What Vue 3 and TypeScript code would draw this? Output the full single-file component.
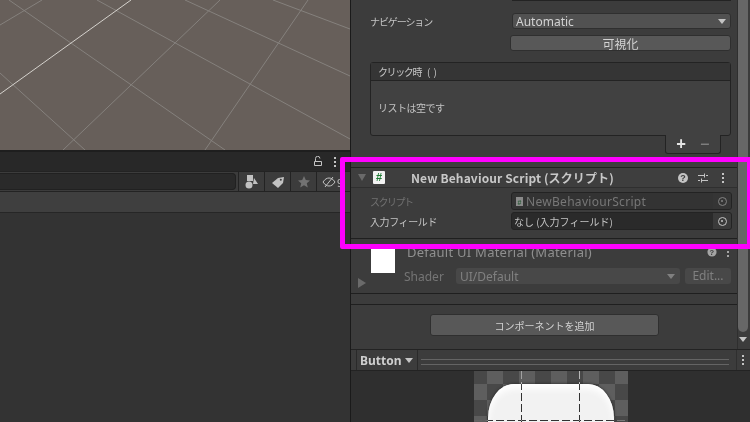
<script setup lang="ts">
const mainLine = 'M0 94 L131 0';
const thin = [
  'M0 25 L42 0',
  'M9 0 L225 150',
  'M220 0 L63 150',
  'M308 0 L205 150',
  'M97 0 L350 139',
  'M185 0 L350 76',
  'M273 0 L350 29',
  'M0 73 L85 150',
];
</script>

<template>
  <div class="app">
    <div class="left">
      <div class="viewport">
        <svg class="grid" width="350" height="150" viewBox="0 0 350 150">
          <path v-for="d in thin" :key="d" :d="d" stroke="#85817d" stroke-width="1" fill="none" />
          <path :d="mainLine" stroke="#d5d2cd" stroke-width="1" fill="none" />
        </svg>
      </div>
      <div class="tabbar">
        <svg width="10" height="11" viewBox="0 0 10 11" class="lock">
          <path d="M1.5 5.5h7v4h-7zM2.5 5V2.5a2.2 2.2 0 0 1 4.4 0" fill="none" stroke="#c4c4c4" />
        </svg>
        <span class="kebab"><i></i><i></i><i></i></span>
      </div>
      <div class="toolbar">
        <div class="search"></div>
        <div class="tool">
          <svg width="14" height="14" viewBox="0 0 14 14">
            <rect x="2" y="0" width="6" height="6" fill="#c2c2c2" />
            <circle cx="4" cy="10" r="3.5" fill="#c2c2c2" />
            <path d="M9 3l4 6H8z" fill="#c2c2c2" />
          </svg>
        </div>
        <div class="tool">
          <svg width="14" height="14" viewBox="0 0 14 14">
            <path d="M1 8l6-5 6-1-1 6-5 5z" fill="#c2c2c2" />
            <circle cx="9.8" cy="4.8" r="1" fill="#3c3c3c" />
          </svg>
        </div>
        <div class="tool">
          <svg width="14" height="14" viewBox="0 0 14 14">
            <path d="M7 1l1.8 4 4.2.4-3.2 2.8 1 4.3L7 10.2l-3.8 2.3 1-4.3L1 5.4 5.2 5z" fill="#727272" />
          </svg>
        </div>
        <div class="tool eye">
          <svg width="14" height="12" viewBox="0 0 14 12">
            <path d="M1 6c2-3 4-4 6-4s4 1 6 4c-2 3-4 4-6 4S3 9 1 6zM3 11L11 1" fill="none" stroke="#c2c2c2" />
          </svg>
          <span class="nine">9</span>
        </div>
      </div>
      <div class="subbar"></div>
      <div class="project"></div>
    </div>

    <div class="right">
      <div class="scrollcol">
        <div class="inspector">
          <div class="top-row"><div class="stub"></div></div>
          <div class="prop nav">
            <span class="label nav-label">ナビゲーション</span>
            <div class="dropdown"><span>Automatic</span><i class="caret"></i></div>
          </div>
          <div class="visual"><button class="btn vis">可視化</button></div>
          <div class="event">
            <div class="event-head"><span class="event-name">クリック時</span><span class="parens">()</span></div>
            <div class="event-body">リストは空です</div>
          </div>
          <div class="footer-wrap">
            <div class="pm"><span class="plus">+</span><span class="minus">−</span></div>
          </div>
          <div class="script-head">
            <i class="fold"></i>
            <span class="file"><b>#</b></span>
            <span class="title">New Behaviour Script (スクリプト)</span>
            <span class="head-icons">
              <svg width="12" height="12" viewBox="0 0 12 12"><circle cx="6" cy="6" r="5" fill="#c4c4c4" /><text x="6" y="9" text-anchor="middle" class="q">?</text></svg>
              <svg width="12" height="12" viewBox="0 0 12 12"><path d="M1 3.5h6M9 3.5h2M7.5 1.5v4M1 8.5h2M5 8.5h6M4.5 6.5v4" stroke="#c4c4c4" fill="none" /></svg>
              <span class="kebab head-kebab"><i></i><i></i><i></i></span>
            </span>
          </div>
          <div class="script-body">
            <div class="prop dim">
              <span class="label script-label">スクリプト</span>
              <div class="objfield disabled">
                <span class="mini"><b>#</b></span><span class="objname">NewBehaviourScript</span>
                <span class="pick"><i></i></span>
              </div>
            </div>
            <div class="prop">
              <span class="label field-label">入力フィールド</span>
              <div class="objfield">
                <span class="none">なし (入力フィールド)</span>
                <span class="pick"><i></i></span>
              </div>
            </div>
          </div>
          <div class="material">
            <div class="swatch-col"><div class="swatch"></div><i class="mat-fold"></i></div>
            <div class="mat-main">
              <div class="mat-title">
                <span>Default UI Material (Material)</span>
                <span class="mat-icons">
                  <svg width="10" height="10" viewBox="0 0 12 12"><circle cx="6" cy="6" r="5.5" fill="#a5a5a5" /><text x="6" y="9.5" text-anchor="middle" class="q">?</text></svg>
                  <span class="kebab small"><i></i><i></i><i></i></span>
                </span>
              </div>
              <div class="mat-row">
                <span class="shader">Shader</span>
                <div class="shader-drop"><span>UI/Default</span><i class="caret"></i></div>
                <div class="edit">Edit...</div>
              </div>
            </div>
          </div>
          <div class="add-zone"><button class="btn add">コンポーネントを追加</button></div>
        </div>
        <div class="scrollbar"><div class="thumb"></div><i class="sb-arrow"></i></div>
      </div>
      <div class="preview-bar">
        <div class="pv-name">Button <i class="caret white"></i></div>
        <div class="pv-lines"></div>
        <div class="pv-menu"><span class="kebab"><i></i><i></i><i></i></span></div>
      </div>
      <div class="preview">
        <div class="checker">
          <div class="sprite"></div>
          <i class="slice v1"></i><i class="slice v2"></i><i class="slice h1"></i>
        </div>
      </div>
    </div>
    <div class="highlight"></div>
  </div>
</template>

<style>
html, body { margin: 0; background: #282828; }
</style>

<style scoped>
.app { position: relative; width: 750px; height: 422px; overflow: hidden; display: flex; background: #282828; font-family: "Noto Sans CJK JP", "Noto Sans", sans-serif; font-size: 10px; color: #c4c4c4; }
.left { width: 350px; flex: none; display: flex; flex-direction: column; }
.viewport { height: 152px; box-sizing: border-box; background: #675f5a; border-bottom: 2px solid #1e1e1e; }
.grid { display: block; }
.tabbar { height: 19px; background: #282828; display: flex; align-items: center; justify-content: flex-end; gap: 11px; padding-right: 13px; }
.lock { display: block; }
.kebab { display: inline-flex; flex-direction: column; gap: 2px; width: 3px; }
.kebab i { width: 2px; height: 2px; background: #c4c4c4; display: block; }
.toolbar { height: 21px; background: #3c3c3c; border-top: 1px solid #232323; border-bottom: 1px solid #232323; display: flex; box-sizing: border-box; }
.search { flex: 1; margin: 1px 2px 1px 0; background: #2a2a2a; border: 1px solid #212121; border-left: 0; border-radius: 0 4px 4px 0; }
.tool { width: 26px; flex: none; box-sizing: border-box; border-left: 1px solid #232323; display: flex; align-items: center; justify-content: center; }
.eye { overflow: hidden; justify-content: flex-start; padding-left: 5px; gap: 1px; width: 34px; }
.nine { font-size: 11px; color: #c2c2c2; }
.subbar { height: 21px; box-sizing: border-box; background: #3f3f3f; border-bottom: 1px solid #262626; }
.project { flex: 1; background: #333; }

.right { width: 400px; flex: none; display: flex; flex-direction: column; border-left: 1px solid #1a1a1a; box-sizing: border-box; background: #3c3c3c; }
.scrollcol { height: 349px; display: flex; flex: none; overflow: hidden; }
.inspector { flex: 1; min-width: 0; }
.top-row { height: 2px; }
.stub { margin-left: 161px; margin-right: 6px; height: 1px; background: #232323; }
.prop { display: flex; align-items: center; height: 20px; padding-left: 19px; }
.label { width: 141px; flex: none; font-size: 10px; }
.nav-label { width: 142px; letter-spacing: -1.1px; }
.script-label { letter-spacing: -1.5px; }
.field-label { letter-spacing: -0.4px; }
.nav { margin-top: 11px; height: 16px; }
.dropdown { width: 219px; height: 16px; background: #515151; border-radius: 3px; border: 1px solid #2f2f2f; box-sizing: border-box; display: flex; align-items: center; justify-content: space-between; padding: 0 4px 0 3px; font-family: "Noto Sans", sans-serif; font-size: 12px; color: #d2d2d2; }
.caret { width: 0; height: 0; border-left: 4px solid transparent; border-right: 4px solid transparent; border-top: 5px solid #c4c4c4; display: block; }
.visual { margin: 6px 6px 0 159px; }
.btn { display: block; width: 100%; padding: 0; font: inherit; color: #d2d2d2; background: #585858; border: 1px solid #2f2f2f; border-radius: 3px; box-sizing: border-box; }
.vis { height: 16px; line-height: 13px; font-size: 12px; }
.event { margin: 11px 6px 0 19px; border: 1px solid #232323; border-radius: 3px; background: #414141; height: 74px; box-sizing: border-box; }
.event-head { height: 18px; line-height: 17px; padding-left: 7px; background: #353535; border-bottom: 1px solid #232323; box-sizing: border-box; }
.event-name { letter-spacing: -1.4px; }
.parens { margin-left: 6px; letter-spacing: 3px; }
.event-body { line-height: 53px; padding-left: 7px; letter-spacing: -0.5px; }
.footer-wrap { display: flex; justify-content: flex-end; padding-right: 16px; height: 21px; }
.pm { width: 56px; height: 19px; margin-top: -1px; background: #414141; border: 1px solid #232323; border-top: 0; border-radius: 0 0 3px 3px; display: flex; justify-content: center; align-items: center; gap: 14px; font-family: "Noto Sans", sans-serif; font-size: 17px; line-height: 18px; box-sizing: border-box; }
.plus { color: #e4e4e4; font-weight: 700; }
.minus { color: #8a8a8a; }
.script-head { height: 19px; margin-top: 10px; background: #3e3e3e; border-top: 1px solid #1f1f1f; border-bottom: 1px solid #2f2f2f; display: flex; align-items: center; position: relative; box-sizing: content-box; }
.fold { margin-left: 7px; width: 0; height: 0; border-left: 4px solid transparent; border-right: 4px solid transparent; border-top: 7px solid #6a6a6a; }
.file { margin-left: 7px; width: 12px; height: 13px; background: #f2f2f2; border-radius: 1px; text-align: center; line-height: 12px; }
.file b { color: #1e7b34; font-family: "Liberation Sans", sans-serif; font-size: 11px; }
.title { margin-left: 26px; font-weight: 700; font-size: 12px; letter-spacing: 0.12px; color: #c8c8c8; }
.head-icons { margin-left: auto; margin-right: 12px; display: flex; align-items: center; gap: 8px; }
.head-kebab { margin-left: 5px; }
.q { font-family: "Liberation Sans", sans-serif; font-size: 9px; font-weight: 700; fill: #3c3c3c; }
.script-body { padding: 3px 0 7px; border-bottom: 1px solid #1f1f1f; }
.dim .label { color: #707070; }
.objfield { width: 221px; height: 18px; box-sizing: border-box; background: #2a2a2a; border: 1px solid #232323; border-radius: 3px; display: flex; align-items: center; padding-left: 2px; position: relative; color: #c4c4c4; }
.objfield.disabled { color: #777; background: #333; }
.objname { font-family: "Noto Sans", sans-serif; font-size: 12px; letter-spacing: 0.3px; }
.mini { width: 7px; height: 9px; background: #8a8a8a; margin: 0 3px 0 2px; display: block; text-align: center; line-height: 8px; }
.mini b { font-size: 7px; color: #2c5a38; font-family: "Liberation Sans", sans-serif; }
.none { font-size: 10px; }
.pick { position: absolute; right: 0; top: 0; bottom: 0; width: 18px; background: #3a3a3a; border-radius: 0 2px 2px 0; display: flex; align-items: center; justify-content: center; }
.disabled .pick { background: #383838; opacity: 0.55; }
.pick i { width: 9px; height: 9px; border: 1px solid #c4c4c4; border-radius: 50%; box-sizing: border-box; display: block; position: relative; }
.pick i::after { content: ""; position: absolute; left: 2.5px; top: 2.5px; width: 2px; height: 2px; border-radius: 50%; background: #c4c4c4; }
.material { display: flex; height: 55px; box-sizing: border-box; border-bottom: 1px solid #1f1f1f; }
.swatch-col { width: 56px; flex: none; position: relative; }
.swatch { position: absolute; left: 20px; top: 10px; width: 24px; height: 24px; background: #fff; }
.mat-fold { position: absolute; left: 7px; top: 39px; width: 0; height: 0; border-top: 5px solid transparent; border-bottom: 5px solid transparent; border-left: 8px solid #6a6a6a; }
.mat-main { flex: 1; padding: 6px 6px 0 0; }
.mat-title { height: 14px; display: flex; align-items: center; justify-content: space-between; font-size: 13px; letter-spacing: 0.25px; color: #8f8f8f; font-family: "Noto Sans", sans-serif; }
.mat-icons { display: flex; align-items: center; gap: 10px; padding-right: 1px; }
.kebab.small i { background: #a5a5a5; }
.mat-row { display: flex; align-items: center; margin-top: 9px; height: 16px; margin-left: -3px; }
.shader { width: 52px; color: #757575; font-family: "Noto Sans", sans-serif; font-size: 12px; flex: none; }
.shader-drop { width: 224px; height: 16px; background: #484848; border-radius: 3px; display: flex; align-items: center; justify-content: space-between; padding: 0 5px 0 4px; box-sizing: border-box; color: #808080; font-family: "Noto Sans", sans-serif; font-size: 12px; }
.shader-drop .caret { border-top-color: #808080; }
.edit { margin-left: 5px; width: 46px; height: 16px; background: #484848; border-radius: 3px; text-align: center; line-height: 15px; color: #808080; font-family: "Noto Sans", sans-serif; font-size: 12px; }
.add-zone { border-top: 1px solid #1f1f1f; margin-top: 10px; padding: 9px 0 0 79px; }
.add { width: 229px; height: 22px; font-size: 10px; }
.scrollbar { width: 13px; flex: none; background: #3c3c3c; position: relative; border-left: 1px solid #2f2f2f; box-sizing: border-box; }
.thumb { position: absolute; left: 0; right: 2px; top: 0; height: 332px; background: #676767; border-radius: 0 0 5px 5px; }
.sb-arrow { position: absolute; left: 1px; top: 337px; width: 0; height: 0; border-left: 4px solid transparent; border-right: 4px solid transparent; border-top: 5px solid #c4c4c4; }
.preview-bar { height: 22px; box-sizing: border-box; background: #3c3c3c; border-top: 1px solid #232323; border-bottom: 1px solid #232323; display: flex; }
.pv-name { margin-left: 5px; width: 62px; border-left: 1px solid #2a2a2a; border-right: 1px solid #2a2a2a; display: flex; align-items: center; gap: 3px; padding-left: 3px; box-sizing: border-box; font-family: "Noto Sans", sans-serif; font-weight: 700; font-size: 12px; color: #cfcfcf; }
.pv-lines { flex: 1; margin: 9px 7px 0 3px; height: 4px; border-top: 1px solid #646464; border-bottom: 1px solid #646464; }
.pv-menu { width: 13px; border-left: 1px solid #2f2f2f; display: flex; align-items: center; justify-content: center; }
.preview { flex: 1; background: #2f2f2f; display: flex; justify-content: center; overflow: hidden; }
.checker { width: 154px; height: 51px; position: relative; background: repeating-conic-gradient(#484848 0 25%, #5e5e5e 0 50%) -19px -3px / 32px 32px; overflow: hidden; }
.sprite { position: absolute; left: 14px; right: 14px; top: 13px; height: 80px; background: #f2f2f2; border-radius: 26px 26px 0 0 / 34px 34px 0 0; box-shadow: inset 0 5px 7px #fff, 0 0 3px #222; }
.slice { position: absolute; display: block; mix-blend-mode: difference; }
.v1, .v2 { top: 0; width: 1px; height: 51px; background: linear-gradient(#fff 0 13px, #c0c0c0 13px); -webkit-mask-image: repeating-linear-gradient(#000 0 8px, transparent 8px 11px); mask-image: repeating-linear-gradient(#000 0 8px, transparent 8px 11px); }
.v1 { left: 47px; }
.v2 { left: 105px; }
.h1 { left: 0; right: 0; top: 49px; height: 1px; background: repeating-linear-gradient(90deg, #c0c0c0 0 8px, transparent 8px 11px); }
.highlight { position: absolute; left: 340px; top: 157px; width: 412px; height: 92px; border: 5px solid #ff00ff; box-sizing: border-box; border-radius: 2px; pointer-events: none; }
</style>
